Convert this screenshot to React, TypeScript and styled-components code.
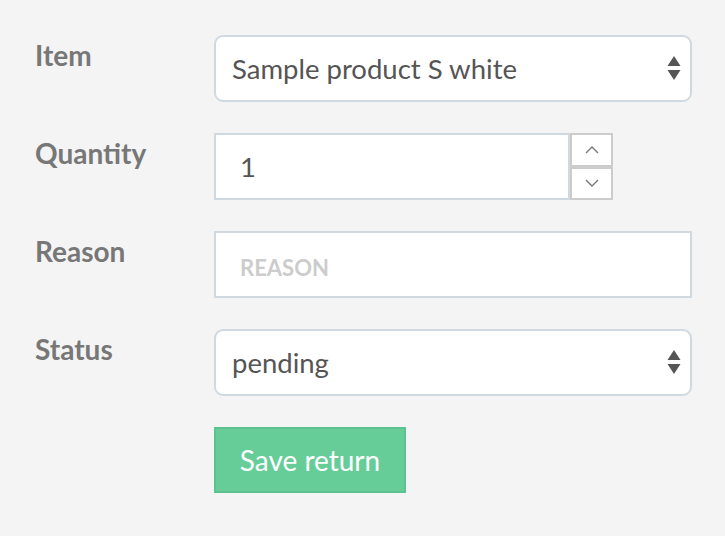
import React from "react";
import styled, { createGlobalStyle } from "styled-components";

const Global = createGlobalStyle`
  html, body { margin: 0; padding: 0; background: #f4f4f4; }
  body { font-family: Lato, "Open Sans", sans-serif; }
  * { box-sizing: border-box; }
`;

const Form = styled.form`
  display: grid;
  grid-template-columns: 179px 478px;
  column-gap: 0;
  row-gap: 31px;
  padding: 35px 0 0 35px;
  align-items: start;
`;

const Label = styled.label`
  font-family: Lato, sans-serif;
  font-weight: 700;
  font-size: 28px;
  line-height: 34px;
  color: #777777;
  padding-top: 3px;
`;

const FieldBox = styled.div<{ $rounded?: boolean }>`
  position: relative;
  height: 67px;
  background: #fff;
  border: 2px solid #d0d9e0;
  border-radius: ${(p) => (p.$rounded ? "9px" : "0")};
  display: flex;
  align-items: center;
  padding-left: ${(p) => (p.$rounded ? "16px" : "24px")};
  font-size: 27.5px;
  color: #555555;
`;

const SelectArrows = styled.svg`
  position: absolute;
  right: 9px;
  top: 50%;
  transform: translateY(-50%);
`;

const QtyRow = styled.div`
  display: flex;
  width: 399px;
`;

const QtyInput = styled(FieldBox)`
  flex: 1;
`;

const Spinner = styled.div`
  display: flex;
  flex-direction: column;
  width: 43px;
  height: 67px;
`;

const SpinButton = styled.div`
  flex: 1;
  background: #fff;
  border: 2px solid #cccccc;
  display: flex;
  align-items: center;
  justify-content: center;
`;

const Placeholder = styled.span`
  font-size: 22px;
  font-weight: 700;
  color: #cccccc;
  text-transform: uppercase;
  padding-top: 5px;
`;

const Button = styled.button`
  grid-column: 2;
  justify-self: start;
  width: 192px;
  height: 66px;
  background: #66cd99;
  border: 2px solid #5cc190;
  color: #fff;
  font-family: Lato, sans-serif;
  font-size: 28px;
  padding: 0;
  cursor: pointer;
`;

const Arrows = () => (
  <SelectArrows width="14" height="26" viewBox="0 0 14 26">
    <polygon points="7,0 13.5,10 0.5,10" fill="#555" />
    <polygon points="0.5,14 13.5,14 7,24" fill="#555" />
  </SelectArrows>
);

const Chevron = ({ up }: { up?: boolean }) => (
  <svg width="14" height="8" viewBox="0 0 14 8">
    <polyline
      points={up ? "1,7 7,1 13,7" : "1,1 7,7 13,1"}
      fill="none"
      stroke="#777"
      strokeWidth="1.4"
    />
  </svg>
);

export default function App() {
  return (
    <>
      <Global />
      <Form onSubmit={(e) => e.preventDefault()}>
        <Label>Item</Label>
        <FieldBox $rounded>
          Sample product S white
          <Arrows />
        </FieldBox>

        <Label>Quantity</Label>
        <QtyRow>
          <QtyInput>1</QtyInput>
          <Spinner>
            <SpinButton>
              <Chevron up />
            </SpinButton>
            <SpinButton>
              <Chevron />
            </SpinButton>
          </Spinner>
        </QtyRow>

        <Label>Reason</Label>
        <FieldBox>
          <Placeholder>Reason</Placeholder>
        </FieldBox>

        <Label>Status</Label>
        <FieldBox $rounded>
          pending
          <Arrows />
        </FieldBox>

        <Button type="submit">Save return</Button>
      </Form>
    </>
  );
}
